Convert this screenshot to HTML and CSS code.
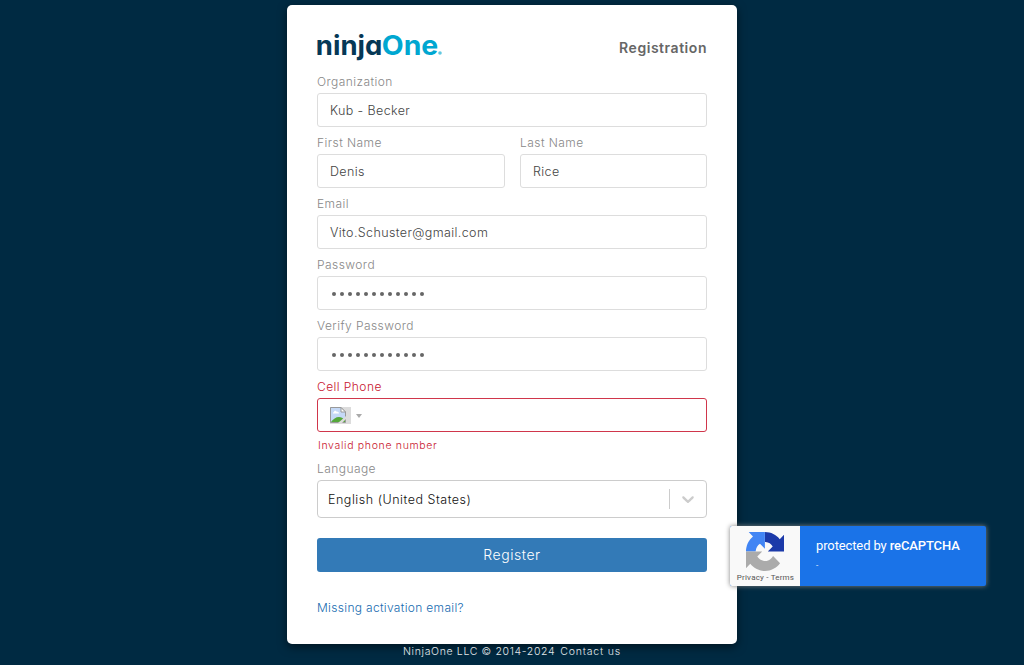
FILE: index.html
```html
<!DOCTYPE html>
<html lang="en">
<head>
<meta charset="utf-8">
<title>Registration</title>
<link rel="stylesheet" href="styles.css">
</head>
<body>
<main class="card">
  <header class="card-header">
    <svg class="logo" viewBox="0 0 128 32" role="img">
      <text class="logo-ninja" x="-1.2" y="25" textLength="66.5" lengthAdjust="spacingAndGlyphs">ninja</text>
      <text class="logo-one" x="64.800" y="25" textLength="56.5" lengthAdjust="spacingAndGlyphs">One</text>
      <circle class="logo-dot" cx="123" cy="23" r="1.8"/>
    </svg>
    <h1 class="title">Registration</h1>
  </header>
  <form class="form">
    <div class="field"><span class="label">Organization</span><div class="input">Kub - Becker</div></div>
    <div class="row">
      <div class="field first"><span class="label">First Name</span><div class="input">Denis</div></div>
      <div class="field"><span class="label">Last Name</span><div class="input">Rice</div></div>
    </div>
    <div class="field"><span class="label">Email</span><div class="input">Vito.Schuster@gmail.com</div></div>
    <div class="field"><span class="label">Password</span><div class="input password"><i></i><i></i><i></i><i></i><i></i><i></i><i></i><i></i><i></i><i></i><i></i><i></i></div></div>
    <div class="field"><span class="label">Verify Password</span><div class="input password"><i></i><i></i><i></i><i></i><i></i><i></i><i></i><i></i><i></i><i></i><i></i><i></i></div></div>
    <div class="field phone">
      <span class="label">Cell Phone</span>
      <div class="input">
        <span class="flag"><svg width="16" height="16" viewBox="0 0 16 16">
          <path d="M.5.5H11L15.5 5V15.5H.5Z" fill="#c5d9f7" stroke="#999"/>
          <path d="M3 6.5h6c0-2-2-2-2.300-1.500C6 3 4 4 4 5 3 5 3 6 3 6.500Z" fill="#fff"/>
          <path d="M1 15c2-3 5-5 8-5 2 0 4 1 6 3v2Z" fill="#55a83a"/>
          <path d="M8 16l8-7v3l-4 4Z" fill="#dcdcdc"/>
          <path d="M11 .5V5h4.500Z" fill="#fff" stroke="#999"/>
        </svg></span>
        <span class="caret"></span>
      </div>
      <span class="error">Invalid phone number</span>
    </div>
    <div class="field language">
      <span class="label">Language</span>
      <div class="select"><span class="select-value">English (United States)</span><span class="divider"></span>
        <svg class="chevron" width="20" height="20" viewBox="0 0 20 20"><path d="M4.516 7.548c.436-.446 1.043-.481 1.576 0L10 11.295l3.908-3.747c.533-.481 1.141-.446 1.574 0 .436.445.408 1.197 0 1.615-.406.418-4.695 4.502-4.695 4.502a1.095 1.095 0 0 1-1.576 0S4.924 9.581 4.516 9.163s-.436-1.170 0-1.615z"/></svg>
      </div>
    </div>
    <button class="register" type="button">Register</button>
    <a class="missing">Missing activation email?</a>
  </form>
</main>
<footer class="footer"><span>NinjaOne LLC © 2014-2024</span><a>Contact us</a></footer>
<aside class="captcha">
  <div class="captcha-logo">
    <svg width="38" height="39" viewBox="0 0 64 64" preserveAspectRatio="none">
      <path fill="#1c3aa9" d="M64 31.955V4.687l-7.160 7.160C50.948 4.674 42.033.093 32.050.093V16.350c.485 0 .86.057 1.135.163 4.976.393 9.288 3.140 11.828 7.124l-8.307 8.307Z"/>
      <path fill="#4285f4" d="M31.862.094H4.594l7.160 7.160C4.580 13.147 0 22.060 0 32.046H16.260c0-.485.057-.86.163-1.135.393-4.976 3.140-9.288 7.124-11.828l8.307 8.307Z"/>
      <path fill="#ababab" d="M.001 32.045v27.268l7.160-7.160c5.860 7.173 14.774 11.754 24.760 11.754 10.400 0 19.622-4.960 25.458-12.640l-11.736-11.860a15.550 15.550 0 0 1-4.754 5.334c-2.050 1.600-4.952 2.906-8.968 2.906-.485 0-.86-.057-1.135-.163-4.976-.393-9.288-3.140-11.828-7.124l8.307-8.307Z"/>
    </svg>
    <span class="captcha-links">Privacy - Terms</span>
  </div>
  <div class="captcha-text"><span>protected by <b>reCAPTCHA</b></span><small>-</small></div>
</aside>
</body>
</html>
```
FILE: styles.css
```css
* { box-sizing: border-box; }
body { margin: 0; height: 665px; padding-top: 5px; overflow: hidden; background: #002a42; font-family: Inter, sans-serif; font-weight: 300; }
.card { width: 450px; height: 639px; margin: 0 auto; padding: 25px 30px 0; border-radius: 5px; background: #fff; box-shadow: 0 3px 10px rgba(0,0,0,.5); }
.card-header { display: flex; justify-content: space-between; height: 44px; }
.logo { width: 128px; height: 32px; overflow: visible; }
.logo text { font: 700 27px Inter, sans-serif; font-feature-settings: "cv11"; }
.logo-ninja { fill: #053856; }
.logo-one { fill: #00a7d1; }
.logo-dot { fill: #62c8e0; }
.title { margin: 9px 0 0; font-size: 14px; line-height: 18px; font-weight: 600; letter-spacing: .54px; color: #666; }
.form { display: flex; flex-direction: column; }
.field { display: flex; flex: 1; flex-direction: column; margin-bottom: 8px; }
.row { display: flex; gap: 15px; }
.first { flex: 0 0 188px; }
.label { height: 19px; font-size: 12px; line-height: 16px; letter-spacing: .44px; color: #888; }
.input { display: flex; align-items: center; height: 34px; padding: 1px 12px 0; border: 1px solid #ddd; border-radius: 3px; font-size: 12.5px; letter-spacing: .38px; color: #444; }
.password { gap: 4px; padding: 2px 14px 0; }
.password i { width: 4px; height: 4px; border-radius: 50%; background: #666; }
.phone { margin-bottom: 7px; }
.phone .label { color: #c8152e; }
.phone .input { padding: 1px 12px 0; border-color: #d0364b; }
.flag { display: flex; width: 21px; height: 17px; background: #dcdcdc; }
.caret { margin-left: 5px; border: 3px solid transparent; border-top: 4px solid #aaa; border-bottom: 0; }
.error { padding: 6px 0 0 1px; height: 22px; font-size: 10.5px; line-height: 16px; letter-spacing: .67px; color: #c8152e; }
.language { margin-bottom: 20px; }
.select { display: flex; align-items: center; height: 38px; padding: 0 8px 0 10px; border: 1px solid #ccc; border-radius: 4px; font-size: 12.5px; letter-spacing: .52px; color: #111; }
.select-value { flex: 1; }
.divider { width: 1px; height: 20px; margin-right: 8px; background: #ccc; }
.chevron { fill: #ccc; }
.register { height: 34px; padding: 0 0 2px; border: 0; border-radius: 3px; background: #337ab7; color: #fff; font: 300 14px Inter, sans-serif; letter-spacing: .55px; }
.missing { margin-top: 28px; font-size: 12px; line-height: 16px; letter-spacing: .32px; color: #176bb0; }
.footer { display: flex; justify-content: center; gap: 5px; font-size: 10.5px; line-height: 15px; letter-spacing: .7px; color: #e3e8eb; }
.footer span { letter-spacing: .65px; }
.footer a { letter-spacing: .82px; }
.captcha { position: absolute; left: 730px; top: 526px; display: flex; width: 256px; height: 60px; border-radius: 2px; overflow: hidden; background: #1a73e8; box-shadow: 0 0 5px gray; font-family: Roboto, sans-serif; font-weight: 400; }
.captcha-logo { display: flex; flex-direction: column; align-items: center; width: 70px; padding-top: 6px; background: #f9f9f9; }
.captcha-links { margin-top: 1px; padding: 1px 0 0 1px; font-size: 8px; line-height: 10px; letter-spacing: .2px; color: #555; white-space: nowrap; }
.captcha-text { display: flex; flex-direction: column; padding: 12px 0 0 16px; font-size: 13px; line-height: 16px; letter-spacing: -.12px; color: #fff; }
.captcha-text b { font-weight: 500; }
.captcha-text small { margin-top: 6px; font-size: 8px; line-height: 12px; }
```
